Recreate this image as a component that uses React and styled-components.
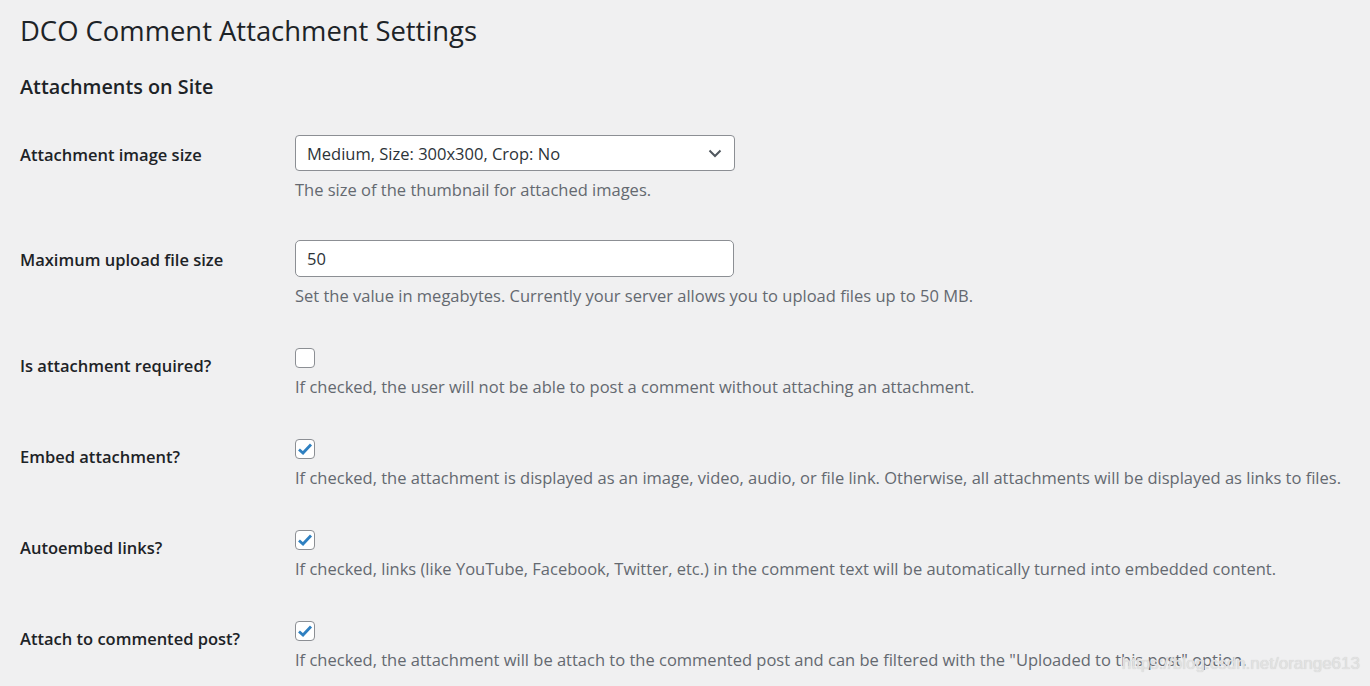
import React from 'react';
import styled, { createGlobalStyle } from 'styled-components';

const GlobalStyle = createGlobalStyle`
  html, body {
    margin: 0;
    padding: 0;
    background: #f0f0f1;
  }
  body {
    font-family: "Open Sans", "Noto Sans", sans-serif;
    color: #1d2327;
  }
`;

const rows = [
  {
    label: 'Attachment image size',
    type: 'select',
    value: 'Medium, Size: 300x300, Crop: No',
    description: 'The size of the thumbnail for attached images.',
  },
  {
    label: 'Maximum upload file size',
    type: 'text',
    value: '50',
    description:
      'Set the value in megabytes. Currently your server allows you to upload files up to 50 MB.',
  },
  {
    label: 'Is attachment required?',
    type: 'checkbox',
    checked: false,
    description:
      'If checked, the user will not be able to post a comment without attaching an attachment.',
  },
  {
    label: 'Embed attachment?',
    type: 'checkbox',
    checked: true,
    description:
      'If checked, the attachment is displayed as an image, video, audio, or file link. Otherwise, all attachments will be displayed as links to files.',
  },
  {
    label: 'Autoembed links?',
    type: 'checkbox',
    checked: true,
    description:
      'If checked, links (like YouTube, Facebook, Twitter, etc.) in the comment text will be automatically turned into embedded content.',
  },
  {
    label: 'Attach to commented post?',
    type: 'checkbox',
    checked: true,
    description:
      'If checked, the attachment will be attach to the commented post and can be filtered with the "Uploaded to this post" option.',
  },
];

const Control = ({ row }) => {
  if (row.type === 'select') {
    return (
      <SelectBox>
        <span>{row.value}</span>
        <svg width="14" height="9" viewBox="0 0 14 9">
          <path d="M1.5 1.5 L7 7 L12.5 1.5" fill="none" stroke="#50575e" strokeWidth="2" />
        </svg>
      </SelectBox>
    );
  }
  if (row.type === 'text') {
    return <TextBox>{row.value}</TextBox>;
  }
  return (
    <CheckLine>
      <CheckBox>
        {row.checked && (
          <svg width="16" height="14" viewBox="0 0 16 14">
            <path d="M2 7.5 L6 11 L14 2.5" fill="none" stroke="#2f80c1" strokeWidth="2.8" strokeLinejoin="miter" />
          </svg>
        )}
      </CheckBox>
    </CheckLine>
  );
};

const App = () => {
  return (
    <Page>
      <GlobalStyle />
      <Title>DCO Comment Attachment Settings</Title>
      <SectionTitle>Attachments on Site</SectionTitle>
      <FormTable>
        {rows.map((row) => (
          <Row key={row.label}>
            <Label>{row.label}</Label>
            <Field>
              <Control row={row} />
              <Description>{row.description}</Description>
            </Field>
          </Row>
        ))}
      </FormTable>
      <Watermark>https://blog.csdn.net/orange613</Watermark>
    </Page>
  );
};

export default App;

const Page = styled.div`
  position: relative;
  width: 1370px;
  height: 686px;
  overflow: hidden;
  padding: 0 0 0 20px;
  box-sizing: border-box;
`;

const Title = styled.h1`
  margin: 0;
  padding: 12px 0 0;
  font-size: 27.4px;
  font-weight: 400;
  line-height: 38px;
  color: #1d2327;
`;

const SectionTitle = styled.h2`
  margin: 22px 0 0;
  font-size: 19.8px;
  font-weight: 600;
  line-height: 30px;
  color: #1d2327;
`;

const FormTable = styled.div`
  margin-top: 14.5px;
  display: flex;
  flex-direction: column;
`;

const Row = styled.div`
  display: grid;
  grid-template-columns: 275px 1fr;
  padding: 18.5px 0;
`;

const Label = styled.div`
  padding-top: 9px;
  font-size: 16.5px;
  font-weight: 600;
  line-height: 22px;
  color: #1d2327;
`;

const Field = styled.div`
  display: flex;
  flex-direction: column;
  align-items: flex-start;
`;

const SelectBox = styled.div`
  width: 440px;
  height: 36px;
  box-sizing: border-box;
  border: 1px solid #8c8f94;
  border-radius: 4px;
  background: #fff;
  display: flex;
  align-items: center;
  justify-content: space-between;
  padding: 0 12px 0 11px;
  font-size: 16.5px;
  color: #2c3338;
`;

const TextBox = styled.div`
  width: 439px;
  height: 37px;
  box-sizing: border-box;
  border: 1px solid #8c8f94;
  border-radius: 5px;
  background: #fff;
  display: flex;
  align-items: center;
  padding: 0 11px;
  font-size: 16.5px;
  color: #2c3338;
`;

const CheckLine = styled.div`
  height: 22px;
  display: flex;
  align-items: flex-end;
`;

const CheckBox = styled.div`
  width: 20px;
  height: 20px;
  box-sizing: border-box;
  border: 1px solid #8c8f94;
  border-radius: 4px;
  background: #fff;
  display: flex;
  align-items: center;
  justify-content: center;
`;

const Description = styled.p`
  margin: 6px 0 0;
  font-size: 16.5px;
  line-height: 26px;
  color: #646970;
  white-space: nowrap;
`;

const Watermark = styled.div`
  position: absolute;
  right: 10px;
  bottom: 12px;
  font-family: "Liberation Sans", Arial, sans-serif;
  font-size: 17px;
  color: #e2e2e2;
  text-shadow: 0 0 1px #c8c8c8;
  pointer-events: none;
`;
